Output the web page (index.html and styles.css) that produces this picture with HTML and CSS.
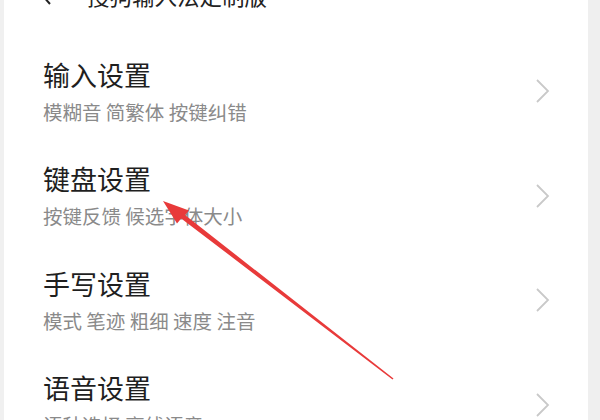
FILE: index.html
```html
<!DOCTYPE html>
<html lang="zh">
<head>
<meta charset="utf-8">
<link rel="stylesheet" href="styles.css">
</head>
<body>
<div class="frame">
  <div class="edge-left"></div>
  <main class="screen">
    <header class="topbar">
      <svg class="back" width="12" height="20" viewBox="0 0 12 20"><path d="M10 1 L2 10 L10 19" fill="none" stroke="#222" stroke-width="2"/></svg>
      <span class="topbar-title">搜狗输入法定制版</span>
    </header>
    <ul class="list">
      <li class="item">
        <div class="item-text">
          <div class="item-title">输入设置</div>
          <div class="item-sub">模糊音 简繁体 按键纠错</div>
        </div>
        <svg class="chev" width="16" height="24" viewBox="0 0 16 24"><path d="M2 1 L13 12 L2 23" fill="none" stroke="#c9c9c9" stroke-width="1.8"/></svg>
      </li>
      <li class="item">
        <div class="item-text">
          <div class="item-title">键盘设置</div>
          <div class="item-sub">按键反馈 候选字体大小</div>
        </div>
        <svg class="chev" width="16" height="24" viewBox="0 0 16 24"><path d="M2 1 L13 12 L2 23" fill="none" stroke="#c9c9c9" stroke-width="1.8"/></svg>
      </li>
      <li class="item">
        <div class="item-text">
          <div class="item-title">手写设置</div>
          <div class="item-sub">模式 笔迹 粗细 速度 注音</div>
        </div>
        <svg class="chev" width="16" height="24" viewBox="0 0 16 24"><path d="M2 1 L13 12 L2 23" fill="none" stroke="#c9c9c9" stroke-width="1.8"/></svg>
      </li>
      <li class="item">
        <div class="item-text">
          <div class="item-title">语音设置</div>
          <div class="item-sub">语种选择 离线语音</div>
        </div>
        <svg class="chev" width="16" height="24" viewBox="0 0 16 24"><path d="M2 1 L13 12 L2 23" fill="none" stroke="#c9c9c9" stroke-width="1.8"/></svg>
      </li>
    </ul>
  </main>
  <div class="edge-right"></div>
  <svg class="annot" width="600" height="420" viewBox="0 0 600 420">
    <polygon fill="#e83a3a" points="163,201 189,210.5 185,215 393.5,378.5 392.5,379.5 181.2,218.4 177,223.5"/>
  </svg>
</div>
</body>
</html>
```
FILE: styles.css
```css
html, body {
  margin: 0;
  padding: 0;
  width: 600px;
  height: 420px;
  overflow: hidden;
  background: #ffffff;
  font-family: "Noto Sans CJK SC", "Noto Sans", sans-serif;
}
.frame {
  position: relative;
  display: flex;
  width: 600px;
  height: 420px;
  overflow: hidden;
}
.edge-left {
  width: 4px;
  background: #f0f0f0;
  flex: none;
}
.edge-right {
  width: 12px;
  background: #efefef;
  flex: none;
}
.screen {
  flex: 1;
  background: #ffffff;
  overflow: hidden;
}
.topbar {
  display: flex;
  align-items: center;
  height: 40px;
  margin-top: -25px;
  padding-left: 36px;
  gap: 35px;
  box-sizing: border-box;
}
.topbar-title {
  font-size: 22.5px;
  color: #222;
  line-height: 1;
}
.list {
  list-style: none;
  margin: 0;
  padding: 0;
  padding-top: 24px;
}
.item {
  display: flex;
  align-items: center;
  justify-content: space-between;
  height: 104.5px;
  padding: 0 37px 0 39px;
  box-sizing: border-box;
}
.item-title {
  font-size: 27px;
  color: #1f1f1f;
  line-height: 34px;
}
.item-sub {
  font-size: 19.5px;
  color: #8a8a8a;
  line-height: 26px;
  margin-top: 7px;
}
.chev {
  flex: none;
}
.annot {
  position: absolute;
  left: 0;
  top: 0;
  pointer-events: none;
}
```
